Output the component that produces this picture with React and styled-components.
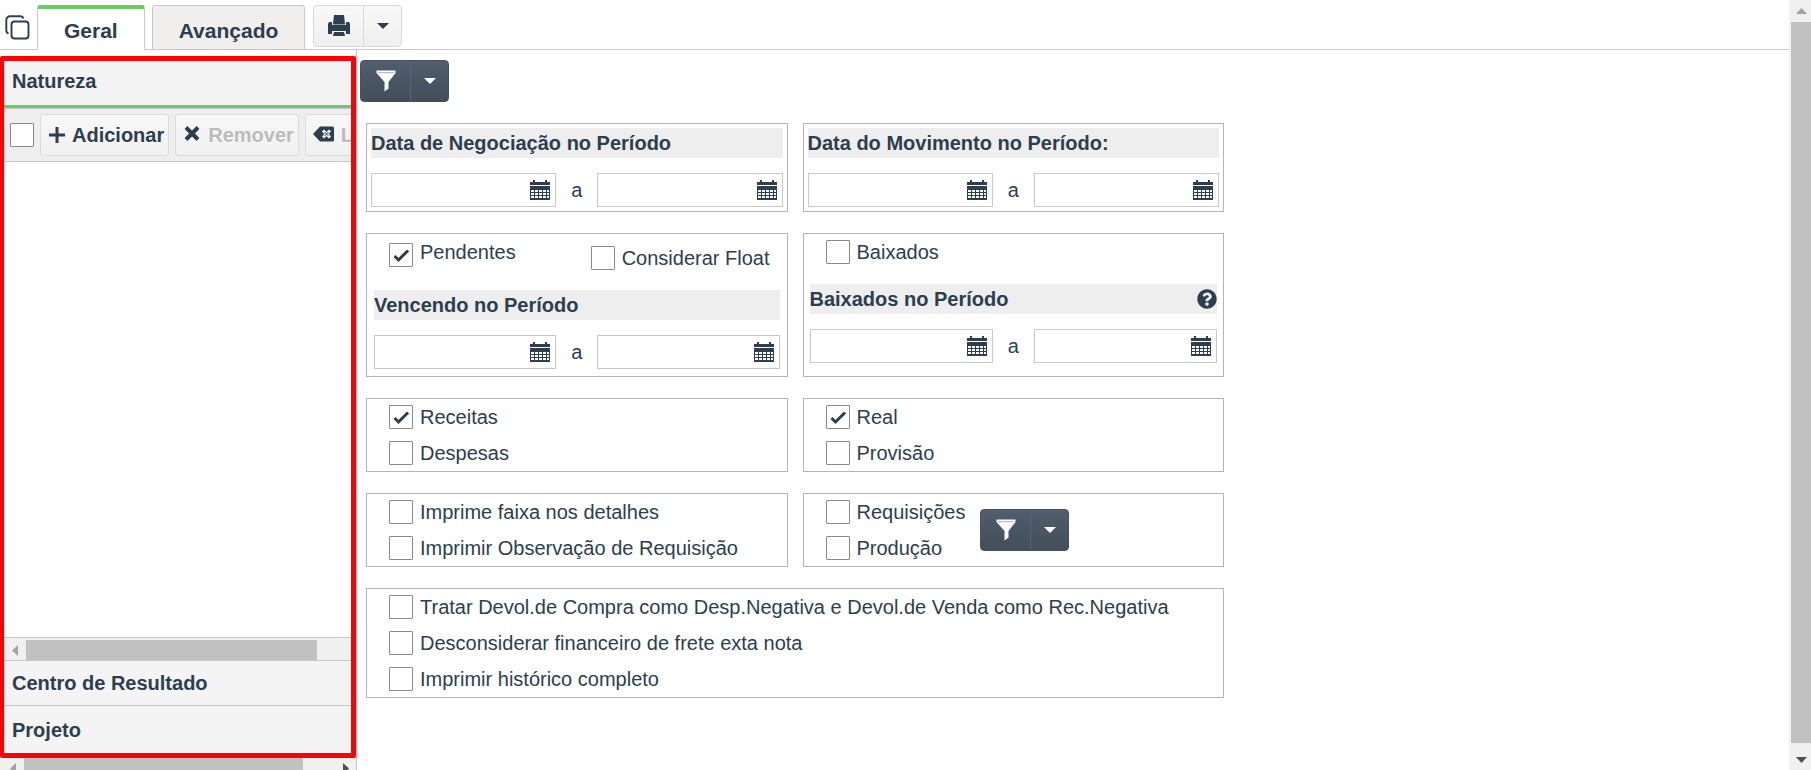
import React from "react"
import styled, { createGlobalStyle, css } from "styled-components"
import { FaQuestionCircle } from "react-icons/fa"

const ink = "#2c3e50"
const line = "#c8c8c8"

const GlobalStyle = createGlobalStyle`
  * {
    box-sizing: border-box;
  }
  body {
    margin: 0;
    background: #fff;
    color: ${ink};
    font-family: "Liberation Sans", Arial, sans-serif;
    font-size: 20px;
    line-height: 24px;
  }
  button,
  input {
    font: inherit;
    color: inherit;
  }
`

const Page = styled.div`
  display: flex;
  height: 100vh;
  overflow: hidden;
`
const Screen = styled.div`
  display: flex;
  flex: 1;
  flex-direction: column;
  min-width: 0;
`
const TopBar = styled.header`
  display: flex;
  flex: none;
  align-items: flex-start;
  height: 50px;
  padding: 5px 0 0 5px;
  border-bottom: 1px solid ${line};
`
const CopyButton = styled.button`
  display: flex;
  width: 32px;
  margin-top: 10px;
  padding: 0;
  border: 0;
  background: none;
`
const Tabs = styled.nav`
  display: flex;
  gap: 7px;
  margin-right: 8px;
`
const Tab = styled.button`
  height: 45px;
  padding: 6px 26px 0;
  border: 1px solid ${line};
  border-radius: 3px 3px 0 0;
  background: #f1efee;
  font-size: 21px;
  font-weight: bold;
  ${(props) =>
    props.$active &&
    css`
      padding-top: 3px;
      border-top: 4px solid #66cc66;
      border-bottom-color: #fff;
      background: #fff;
    `}
`
const Split = styled.div`
  display: inline-flex;
  flex: none;
  height: 42px;
  border: 1px solid ${(props) => (props.$dark ? "#47525f" : "#d9d9d9")};
  border-radius: 4px;
  overflow: hidden;
  background: ${(props) =>
    props.$dark
      ? "linear-gradient(#525d6e, #434e5a)"
      : "linear-gradient(#f8f8f8, #f0f0f0)"};
  color: ${(props) => (props.$dark ? "#fff" : ink)};
`
const SplitButton = styled.button`
  display: flex;
  align-items: center;
  justify-content: center;
  width: ${(props) => (props.$menu ? 38 : 49)}px;
  padding: 0;
  border: 0;
  border-left: ${(props) => (props.$menu ? "1px solid" : "0")};
  border-color: ${(props) => (props.$dark ? "#56647a" : "#d9d9d9")};
  background: none;
  color: inherit;
`

const Content = styled.div`
  display: flex;
  flex: 1;
  min-height: 0;
`
const Sidebar = styled.aside`
  display: flex;
  flex: none;
  flex-direction: column;
  width: 357px;
  padding-top: 6px;
  border-right: 1px solid ${line};
`
const Highlight = styled.div`
  display: flex;
  flex: 1;
  flex-direction: column;
  min-height: 0;
  border: 5px solid #ff0000;
  border-left-width: 4px;
  border-radius: 2px;
  overflow: hidden;
`
const SectionHeader = styled.button`
  flex: none;
  height: ${(props) => (props.$open ? 47 : 45)}px;
  padding: ${(props) => (props.$open ? "0 8px 4px" : "0 8px")};
  border: 0;
  border-top: ${(props) => (props.$open ? "0" : `1px solid ${line}`)};
  border-bottom: ${(props) => (props.$open ? "3px solid #66cc66" : "0")};
  background: #f4f4f4;
  font-weight: bold;
  text-align: left;
  &:last-child {
    height: 48px;
  }
`
const Toolbar = styled.div`
  display: flex;
  flex: none;
  align-items: center;
  gap: 6px;
  height: 54px;
  padding-left: 6px;
  border-top: 1px solid ${line};
  border-bottom: 1px solid ${line};
  background: #eee;
  overflow: hidden;
`
const ToolButton = styled.button`
  display: flex;
  flex: none;
  align-items: center;
  gap: 6px;
  height: 42px;
  padding: 0 4px 0 7px;
  border: 1px solid #dcdcdc;
  border-radius: 3px;
  background: linear-gradient(#f7f7f7, #f1f1f1);
  font-weight: bold;
  text-shadow: 0 1px 0 #fff;
  span {
    color: ${(props) => (props.disabled ? "#bbb" : ink)};
  }
  svg {
    color: ${ink};
  }
`
const TreeArea = styled.div`
  flex: 1;
  min-height: 0;
`

const Track = styled.div`
  display: flex;
  flex: none;
  background: #f0f0f0;
  ${(props) =>
    props.$vertical
      ? css`
          flex-direction: column;
          width: 22px;
          padding-left: 2px;
        `
      : css`
          height: ${props.$clipped ? 12 : 23}px;
          padding: ${props.$clipped ? "0 0 0 2px" : "2px 0 0"};
          border-top: ${props.$clipped ? "0" : `1px solid ${line}`};
          overflow: hidden;
        `}
`
const Thumb = styled.div`
  flex: ${(props) => props.$grow || 1};
  background: #c1c1c1;
`
const Spare = styled.div`
  flex: ${(props) => props.$grow};
`
const Arrow = styled.button`
  display: flex;
  flex: none;
  align-items: center;
  justify-content: center;
  width: ${(props) => (props.$vertical ? 20 : 22)}px;
  height: ${(props) => (props.$vertical ? 22 : 20)}px;
  padding: 0;
  border: 0;
  background: none;
  color: ${(props) => (props.disabled ? "#a3a3a3" : "#505050")};
  ${Thumb} + & {
    margin-top: 5px;
  }
`

const Main = styled.main`
  flex: 1;
  min-width: 0;
  padding: 10px 3px;
`
const Filters = styled.form`
  display: grid;
  grid-template-columns: repeat(2, minmax(0, 1fr));
  gap: 21px 15px;
  max-width: 858px;
  margin: 21px 0 0 6px;
`
const Box = styled.section`
  grid-column: ${(props) => (props.$wide ? "1 / -1" : "auto")};
  padding: ${(props) => props.$pad || "6px"};
  border: 1px solid #b5b5b5;
`
const BoxTitle = styled.h2`
  display: flex;
  align-items: center;
  justify-content: space-between;
  height: 30px;
  margin: 0 0 15px;
  background: #eee;
  font-size: 20px;
`
const Range = styled.div`
  display: grid;
  grid-template-columns: minmax(0, 1fr) 41px minmax(0, 1fr);
  align-items: center;
  text-align: center;
`
const DateBox = styled.div`
  display: flex;
  align-items: center;
  height: 34px;
  padding-right: 5px;
  border: 1px solid ${line};
  input {
    flex: 1;
    min-width: 0;
    height: 100%;
    padding: 0 6px;
    border: 0;
    outline: 0;
    background: none;
  }
  button {
    display: flex;
    padding: 0;
    border: 0;
    background: none;
  }
`
const Options = styled.div`
  display: flex;
  flex-direction: column;
  gap: 12px;
  padding-left: 16px;
`
const OptionsRow = styled.div`
  display: flex;
  align-items: center;
  gap: 15px;
`
const SettledRow = styled.div`
  margin-bottom: 20px;
  padding-left: 16px;
`
const CheckMark = styled.span`
  display: grid;
  flex: none;
  align-self: center;
  width: 24px;
  height: 24px;
  > * {
    grid-area: 1 / 1;
    place-self: center;
  }
  input {
    appearance: none;
    width: 24px;
    height: 24px;
    margin: 0;
    border: 1px solid #8a8a8a;
    border-radius: 1px;
    background: #fff;
  }
  svg {
    visibility: hidden;
    pointer-events: none;
  }
  input:checked + svg {
    visibility: visible;
  }
`
const CheckLabel = styled.label`
  display: flex;
  align-items: center;
  gap: 7px;
  white-space: nowrap;
`
const PendingRow = styled.div`
  display: flex;
  align-items: flex-end;
  justify-content: space-between;
  height: 30px;
  margin-bottom: 20px;
  padding: 0 10px 0 15px;
  ${CheckLabel}:first-child {
    align-items: flex-start;
    height: 30px;
  }
`

function Check(props) {
  return (
    <CheckMark>
      <input
        type="checkbox"
        aria-label={props.label}
        defaultChecked={props.checked}
      />
      <svg width="18" height="18" viewBox="0 0 18 18">
        <path d="M2.500 10 6.500 14 16 4.500" fill="none" stroke={ink} strokeWidth="3" />
      </svg>
    </CheckMark>
  )
}

function Option(props) {
  return (
    <CheckLabel>
      <Check checked={props.checked} />
      {props.children}
    </CheckLabel>
  )
}

const Caret = () => (
  <svg width="12" height="6" viewBox="0 0 12 6">
    <path d="M0 0h12L6 6z" fill="currentColor" />
  </svg>
)

const Funnel = () => (
  <svg width="20" height="22" viewBox="0 0 20 22">
    <path d="M0.500 0.500h19v2.500L12.500 12v6.500l-4 3V12L.5 3z" fill="currentColor" />
    <path d="M2 2.700h16" stroke="#a9adb5" />
  </svg>
)

const Printer = () => (
  <svg width="22" height="22" viewBox="0 0 22 22" fill={ink}>
    <path d="M6 0h10l1 9H5z" />
    <path d="M1 7h3v4h14V7h3l1 2v10h-4v-3H4v3H0V9z" />
    <path d="M4 10h14v5H4z" />
    <path d="M6 17h10l1 4H5z" />
    <path d="M5 9.500h12" stroke="#8e98a3" />
  </svg>
)

const Calendar = () => (
  <svg width="20" height="20" viewBox="0 0 20 20">
    <path d="M0 2h3V0h2v2h10V0h2v2h3v3H0zM0 6h20v14H0z" fill={ink} />
    <path
      d="M1 10h3v2H1zm4 0h3v2H5zm4 0h3v2H9zm4 0h3v2h-3zm4 0h2v2h-2zM1 13h3v2H1zm4 0h3v2H5zm4 0h3v2H9zm4 0h3v2h-3zm4 0h2v2h-2zM1 16h3v2H1zm4 0h3v2H5zm4 0h3v2H9zm4 0h3v2h-3zm4 0h2v2h-2z"
      fill="#fff"
    />
  </svg>
)

const Copy = () => (
  <svg width="25" height="25" viewBox="0 0 25 25" fill="none" stroke={ink} strokeWidth="1.900">
    <rect x="6.500" y="6.500" width="17" height="17" rx="3" />
    <path d="M3.500 18.500C2 18 1.300 17 1.300 15.500V5A3.700 3.700 0 0 1 5 1.300h10c1.800 0 3 .8 3.300 2.200" />
  </svg>
)

const Plus = () => (
  <svg width="18" height="18" viewBox="0 0 18 18">
    <path d="M9 1v16M1 9h16" stroke="currentColor" strokeWidth="3" />
  </svg>
)

const Cross = () => (
  <svg width="19" height="18" viewBox="0 0 19 18">
    <path d="M3 1.500l12 12M15 1.500L3 13.500" stroke="currentColor" strokeWidth="4" />
  </svg>
)

const Backspace = () => (
  <svg width="22" height="18" viewBox="0 0 22 18">
    <path d="M0 8 7 .5h12.500Q21 .5 21 2v12q0 1.500-1.500 1.500H7z" fill="currentColor" />
    <path d="M10 4.500l7 7M17 4.500l-7 7" stroke="#fff" strokeWidth="3" />
    <path d="M11.500 6l4 4M15.500 6l-4 4" stroke="currentColor" />
  </svg>
)

const triangles = {
  up: "M0 8 5.500 2 11 8z",
  down: "M0 3h11L5.500 9z",
  left: "M8 0v11L2 5.500z",
  right: "M3 0v11l6-5.500z",
}

function ScrollArrow(props) {
  return (
    <Arrow
      type="button"
      aria-label={props.label}
      disabled={props.disabled}
      $vertical={props.vertical}
    >
      <svg width="11" height="11" viewBox="0 0 11 11">
        <path d={triangles[props.direction]} fill="currentColor" />
      </svg>
    </Arrow>
  )
}

function SplitAction(props) {
  return (
    <Split $dark={props.dark}>
      <SplitButton type="button" aria-label={props.label} $dark={props.dark}>
        {props.children}
      </SplitButton>
      <SplitButton type="button" aria-label="Mais opções" $menu $dark={props.dark}>
        <Caret />
      </SplitButton>
    </Split>
  )
}

function DateField(props) {
  return (
    <DateBox>
      <input type="text" aria-label={props.label} />
      <button type="button" aria-label="Abrir calendário">
        <Calendar />
      </button>
    </DateBox>
  )
}

function Period(props) {
  return (
    <>
      <BoxTitle>
        {props.title}
        {props.help && <FaQuestionCircle size={20} />}
      </BoxTitle>
      <Range>
        <DateField label={`${props.title} início`} />
        <span>a</span>
        <DateField label={`${props.title} fim`} />
      </Range>
    </>
  )
}

export default function App() {
  return (
    <Page>
      <GlobalStyle />
      <Screen>
        <TopBar>
          <CopyButton type="button" aria-label="Copiar">
            <Copy />
          </CopyButton>
          <Tabs>
            <Tab type="button" $active>
              Geral
            </Tab>
            <Tab type="button">Avançado</Tab>
          </Tabs>
          <SplitAction label="Imprimir">
            <Printer />
          </SplitAction>
        </TopBar>

        <Content>
          <Sidebar>
            <Highlight>
              <SectionHeader type="button" $open>
                Natureza
              </SectionHeader>
              <Toolbar>
                <Check label="Selecionar todos" />
                <ToolButton type="button">
                  <Plus />
                  <span>Adicionar</span>
                </ToolButton>
                <ToolButton type="button" disabled>
                  <Cross />
                  <span>Remover</span>
                </ToolButton>
                <ToolButton type="button" disabled>
                  <Backspace />
                  <span>L</span>
                </ToolButton>
              </Toolbar>
              <TreeArea />
              <Track>
                <ScrollArrow direction="left" label="Rolar à esquerda" disabled />
                <Thumb $grow={291} />
                <Spare $grow={34} />
              </Track>
              <SectionHeader type="button">Centro de Resultado</SectionHeader>
              <SectionHeader type="button">Projeto</SectionHeader>
            </Highlight>
            <Track $clipped>
              <ScrollArrow direction="left" label="Rolar à esquerda" disabled />
              <Thumb $grow={279} />
              <Spare $grow={31} />
              <ScrollArrow direction="right" label="Rolar à direita" />
            </Track>
          </Sidebar>

          <Main>
            <SplitAction label="Filtrar" dark>
              <Funnel />
            </SplitAction>
            <Filters>
              <Box $pad="4px">
                <Period title="Data de Negociação no Período" />
              </Box>
              <Box $pad="4px">
                <Period title="Data do Movimento no Período:" />
              </Box>

              <Box $pad="6px 7px 7px">
                <PendingRow>
                  <Option checked>Pendentes</Option>
                  <Option>Considerar Float</Option>
                </PendingRow>
                <Period title="Vencendo no Período" />
              </Box>
              <Box>
                <SettledRow>
                  <Option>Baixados</Option>
                </SettledRow>
                <Period title="Baixados no Período" help />
              </Box>

              <Box>
                <Options>
                  <Option checked>Receitas</Option>
                  <Option>Despesas</Option>
                </Options>
              </Box>
              <Box>
                <Options>
                  <Option checked>Real</Option>
                  <Option>Provisão</Option>
                </Options>
              </Box>

              <Box>
                <Options>
                  <Option>Imprime faixa nos detalhes</Option>
                  <Option>Imprimir Observação de Requisição</Option>
                </Options>
              </Box>
              <Box>
                <OptionsRow>
                  <Options>
                    <Option>Requisições</Option>
                    <Option>Produção</Option>
                  </Options>
                  <SplitAction label="Filtrar requisições" dark>
                    <Funnel />
                  </SplitAction>
                </OptionsRow>
              </Box>

              <Box $wide>
                <Options>
                  <Option>
                    Tratar Devol.de Compra como Desp.Negativa e Devol.de Venda
                    como Rec.Negativa
                  </Option>
                  <Option>Desconsiderar financeiro de frete exta nota</Option>
                  <Option>Imprimir histórico completo</Option>
                </Options>
              </Box>
            </Filters>
          </Main>
        </Content>
      </Screen>

      <Track $vertical>
        <ScrollArrow direction="up" label="Rolar para cima" disabled vertical />
        <Thumb />
        <ScrollArrow direction="down" label="Rolar para baixo" vertical />
      </Track>
    </Page>
  )
}
